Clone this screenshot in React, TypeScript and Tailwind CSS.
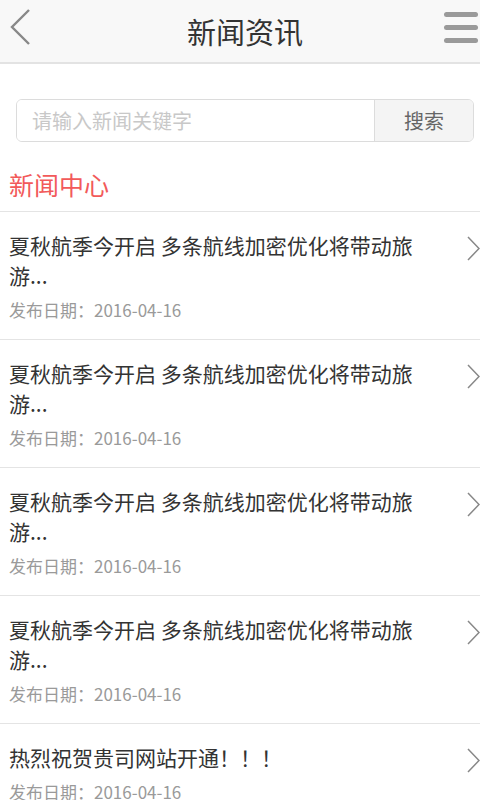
const NEWS = [
  { title: "夏秋航季今开启 多条航线加密优化将带动旅游...", date: "2016-04-16" },
  { title: "夏秋航季今开启 多条航线加密优化将带动旅游...", date: "2016-04-16" },
  { title: "夏秋航季今开启 多条航线加密优化将带动旅游...", date: "2016-04-16" },
  { title: "夏秋航季今开启 多条航线加密优化将带动旅游...", date: "2016-04-16" },
  { title: "热烈祝贺贵司网站开通！！！", date: "2016-04-16" },
];

export default function App() {
  return (
    <div
      className="min-h-[800px] w-[480px] overflow-hidden bg-white"
      style={{ fontFamily: '"Noto Sans CJK SC", "Noto Sans", sans-serif' }}
    >
      {/* 顶栏 */}
      <header className="relative flex h-[64px] items-center justify-center border-b-2 border-[#e3e3e3] bg-[#f8f8f8]">
        <svg className="absolute left-0 top-0" width="40" height="54" viewBox="0 0 40 54">
          <polyline points="29,10 12,27 29,44" fill="none" stroke="#888" strokeWidth="2.4" />
        </svg>
        <h1 className="pl-[10px] text-[29px] leading-none text-[#333]">新闻资讯</h1>
        <div className="absolute right-[2px] top-[12px] flex w-[34px] flex-col gap-[8px]">
          <span className="h-[5px] rounded-full bg-[#9a9a9a]" />
          <span className="h-[5px] rounded-full bg-[#9a9a9a]" />
          <span className="h-[5px] rounded-full bg-[#9a9a9a]" />
        </div>
      </header>

      {/* 搜索 */}
      <div className="px-[16px] pt-[35px]">
        <div className="flex h-[43px] w-[458px] overflow-hidden rounded-[6px] border border-[#dcdcdc]">
          <input
            placeholder="请输入新闻关键字"
            className="min-w-0 flex-1 bg-white pl-[15px] text-[20px] text-[#333] outline-none placeholder:text-[#c8c8c8]"
          />
          <button className="w-[99px] border-l border-[#dcdcdc] bg-[#f4f4f4] text-[20px] text-[#666]">
            搜索
          </button>
        </div>
      </div>

      <h2 className="pl-[9px] pt-[26px] pb-[11px] text-[25px] leading-[32px] text-[#f25a5a]">新闻中心</h2>

      {/* 列表 */}
      <ul>
        {NEWS.map((item, i) => (
          <li
            key={i}
            className="relative border-t border-[#e4e4e4] pl-[9px] pt-[18px] pb-[17px]"
          >
            <p className="w-[440px] text-[21px] leading-[30px] text-[#333]">{item.title}</p>
            <p className="mt-[8px] text-[17px] leading-[24px] text-[#9a9a9a]">
              发布日期：{item.date}
            </p>
            <svg className="absolute right-0 top-[23px]" width="16" height="28" viewBox="0 0 16 28">
              <polyline points="4,2 15,13.5 4,25" fill="none" stroke="#888" strokeWidth="1.5" />
            </svg>
          </li>
        ))}
      </ul>
    </div>
  );
}
